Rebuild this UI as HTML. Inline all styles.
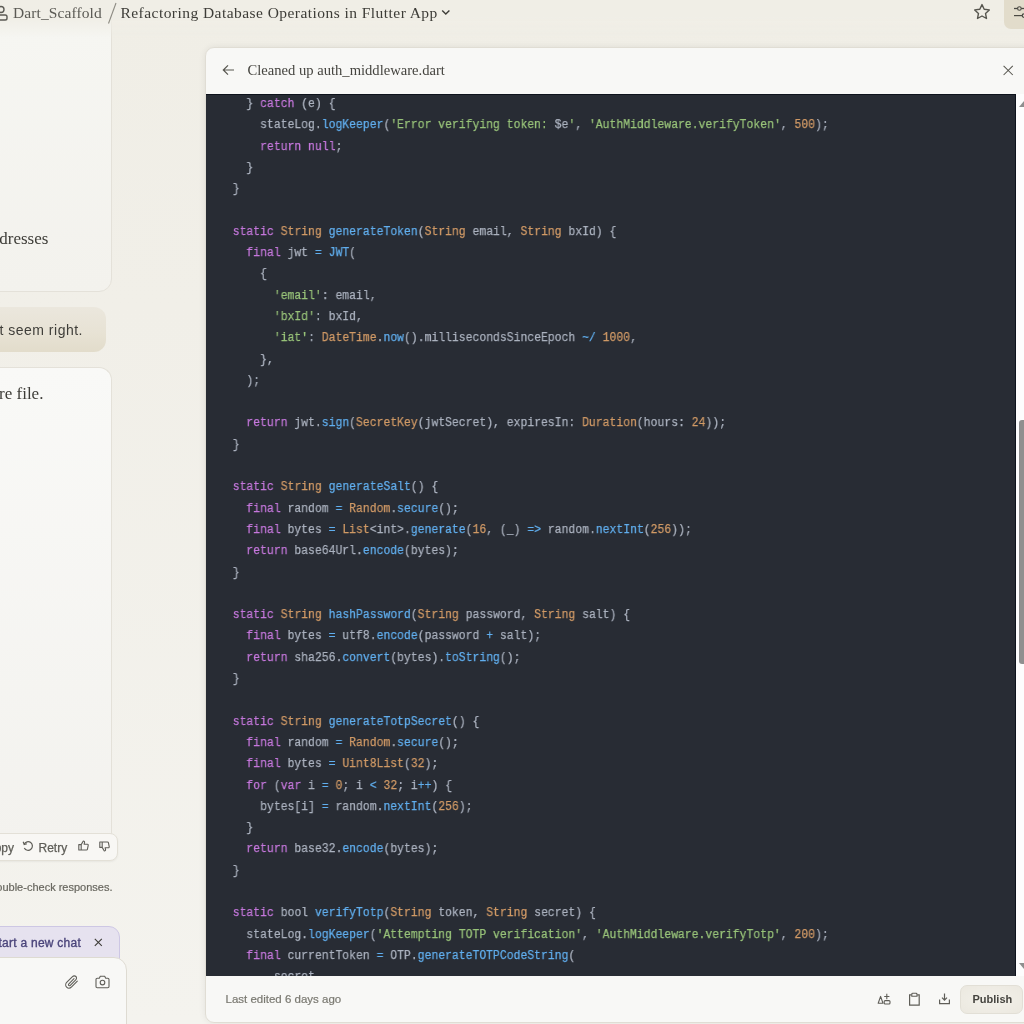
<!DOCTYPE html>
<html><head><meta charset="utf-8">
<style>
*{margin:0;padding:0;box-sizing:border-box}
html,body{width:1024px;height:1024px;overflow:hidden}
html{background:linear-gradient(#f0eee6 0,#f1efe8 30%,#f4f3ee 100%)}
#root{position:absolute;left:0;top:0;width:1024px;height:1024px;will-change:transform}
body{font-family:"Liberation Sans",sans-serif;position:relative}
.abs{position:absolute}
.serif{font-family:"Liberation Serif",serif}
/* top bar */
#crumb1{left:13px;top:3.8px;font-size:15.5px;color:#5b5a54;white-space:nowrap;letter-spacing:0.1px}
#slash{left:107px;top:2px;width:10px;height:22px}
#crumb2{left:120.5px;top:3.8px;font-size:15.5px;color:#3d3c37;white-space:nowrap;letter-spacing:0.45px}
/* left column */
.card{background:#f6f5f1;border:1px solid #e4e1d9;border-radius:13px}
#card1{left:-20px;top:-20px;width:132px;height:311.5px;background:linear-gradient(#f6f6f2 15%,#f3f2ed)}
#card2{left:-20px;top:367px;width:132px;height:480px;border-bottom:none;border-radius:13px 13px 0 0;background:linear-gradient(#f9f9f7,#f3f2ee)}
#bubble{left:-20px;top:307px;width:126px;height:45px;border-radius:12px;background:linear-gradient(#ebe7dd,#e7e2d4 60%,#e2dccb)}
.ltext{white-space:nowrap;color:#3d3c37}
#t1{right:975.6px;top:229px;font-size:17px}
#t2{right:941px;top:322px;font-size:14px;color:#3f3e39;letter-spacing:0.5px}
#t3{right:980.6px;top:383.5px;font-size:17px}
#actions{left:-20px;top:833px;width:138px;height:28px;background:#f8f7f4;border:1px solid #e3e0d7;border-radius:8px;box-shadow:0 1px 2px rgba(0,0,0,.05)}
#acttext{left:0;top:840.5px;font-size:12px;color:#5f5e58;white-space:nowrap;-webkit-text-stroke:0.25px #5f5e58}
#disclaimer{right:911.5px;top:881px;font-size:11px;color:#68675f;white-space:nowrap;-webkit-text-stroke:0.2px #68675f}
#banner{left:-20px;top:926px;width:140px;height:50px;background:#e6e2ef;border:1px solid #cdc7e4;border-radius:11px}
#bantext{right:943px;top:936px;font-size:12px;color:#4a447a;white-space:nowrap;-webkit-text-stroke:0.35px #4a447a;letter-spacing:0.25px}
#input{left:-20px;top:957px;width:147px;height:90px;background:#f8f8f6;border:1px solid #dedbd2;border-radius:13px}
/* artifact panel */
#panel{left:205px;top:47px;width:831px;height:975.5px;background:#f8f8f6;border:1px solid #e0ddd4;border-radius:9px;overflow:hidden;box-shadow:0 0 7px rgba(0,0,0,.07)}
#ptitle{left:247.5px;top:61.8px;font-size:14.6px;color:#45443f;white-space:nowrap;letter-spacing:0px}
#code{left:206px;top:93.7px;width:810px;height:882px;background:#282c34;border-top:1px solid #0e131c;border-right:1px solid #0e131c;overflow:hidden}
pre{position:absolute;left:12.9px;top:-2.0px;font-family:"Liberation Mono",monospace;font-size:13.7px;line-height:21.29px;color:#abb2bf;transform:scaleX(0.83394);transform-origin:0 0;will-change:transform;-webkit-text-stroke:0.25px currentColor}
pre i{font-style:normal}
.k{color:#c678dd}.t{color:#d19a66}.f{color:#61afef}.s{color:#98c379}.n{color:#d19a66}.o{color:#61afef}
#sb{left:1016px;top:93.7px;width:8px;height:882px;background:#fdfdfd}
#thumb{left:1019px;top:420px;width:8px;height:243.5px;background:#8f8f8f;border-radius:3px}
#footer-text{left:225.5px;top:992.5px;font-size:11.5px;color:#7a7971;white-space:nowrap;-webkit-text-stroke:0.2px #7a7971}
#publish{left:960px;top:985px;width:63px;height:29px;border-radius:7px;background:radial-gradient(ellipse at center,#f3f1eb,#ebe8df);border:1px solid #e2dfd6}
#pubtext{left:972.5px;top:993px;font-size:11px;font-weight:bold;color:#45443f}
svg{position:absolute;overflow:visible}
</style></head><body><div id="root">
<!-- top bar -->
<div class="abs" style="left:0;top:0;width:1024px;height:50px;background:linear-gradient(#f0eee6 0,#f0eee6 17px,rgba(240,238,230,0) 38px);z-index:1"></div>
<div style="position:absolute;left:0;top:0;z-index:2">
<svg style="left:-6px;top:5px" width="14" height="16" viewBox="0 0 14 16"><circle cx="7" cy="4.5" r="3" fill="none" stroke="#5b5a54" stroke-width="1.4"/><rect x="1" y="10" width="12" height="5" rx="1.8" fill="none" stroke="#5b5a54" stroke-width="1.4"/></svg>
<div id="crumb1" class="abs serif">Dart_Scaffold</div>
<svg style="left:107px;top:2px" width="10" height="22"><line x1="9" y1="1" x2="1.5" y2="21.5" stroke="#8d8b83" stroke-width="1.1"/></svg>
<div id="crumb2" class="abs serif">Refactoring Database Operations in Flutter App</div>
<svg style="left:441px;top:9px" width="10" height="7"><polyline points="1.2,1.5 4.8,5 8.4,1.5" fill="none" stroke="#3d3c37" stroke-width="1.4"/></svg>
<svg style="left:973px;top:3px" width="18" height="18" viewBox="0 0 18 18"><path d="M9 1.6 L11.2 6.3 L16.3 6.9 L12.5 10.4 L13.5 15.5 L9 13 L4.5 15.5 L5.5 10.4 L1.7 6.9 L6.8 6.3 Z" fill="none" stroke="#57564f" stroke-width="1.4" stroke-linejoin="round"/></svg>
<div class="abs" style="left:1004px;top:-8px;width:40px;height:37px;background:#e2dccb;border-radius:7px"></div>
<svg style="left:1014px;top:6px" width="12" height="14"><line x1="0" y1="2.5" x2="12" y2="2.5" stroke="#4a4943" stroke-width="1.3"/><circle cx="5.4" cy="2.5" r="1.8" fill="#e2dccb" stroke="#4a4943" stroke-width="1.1"/><line x1="0" y1="9.6" x2="12" y2="9.6" stroke="#4a4943" stroke-width="1.2"/><circle cx="10" cy="9.6" r="1.8" fill="#e2dccb" stroke="#4a4943" stroke-width="1.2"/></svg>

</div>
<!-- left column -->
<div id="card1" class="abs card"></div>
<div id="t1" class="abs ltext serif">dresses</div>
<div id="bubble" class="abs"></div>
<div id="t2" class="abs ltext">t seem right.</div>
<div id="card2" class="abs card"></div>
<div id="t3" class="abs ltext serif">middleware file.</div>
<div id="actions" class="abs"></div>
<div id="acttext" class="abs"><span style="position:absolute;right:-14px;white-space:nowrap">Copy</span></div>
<svg style="left:22px;top:840px" width="12" height="12" viewBox="0 0 12 12"><path d="M2.2 4.2 A4.3 4.3 0 1 1 2.3 8" fill="none" stroke="#5f5e58" stroke-width="1.2"/><path d="M1.2 1.8 L2.2 4.6 L4.9 3.7" fill="none" stroke="#5f5e58" stroke-width="1.2"/></svg>
<div class="abs" style="left:38.5px;top:840.5px;font-size:12px;color:#5f5e58;-webkit-text-stroke:0.25px #5f5e58">Retry</div>
<svg style="left:78px;top:840px" width="11" height="11" viewBox="0 0 11 11"><path d="M3.2 4.6 L5.3 1 C6.3 1 6.8 1.8 6.5 2.8 L6.1 4.2 L9.4 4.2 C10 4.2 10.3 4.8 10.2 5.3 L9.4 9.3 C9.3 9.8 8.9 10 8.4 10 L3.2 10 Z M0.8 4.6 L3.2 4.6 L3.2 10 L0.8 10 Z" fill="none" stroke="#5f5e58" stroke-width="1.1" stroke-linejoin="round"/></svg>
<svg style="left:99px;top:841px" width="11" height="11" viewBox="0 0 11 11"><path d="M3.2 6.4 L5.3 10 C6.3 10 6.8 9.2 6.5 8.2 L6.1 6.8 L9.4 6.8 C10 6.8 10.3 6.2 10.2 5.7 L9.4 1.7 C9.3 1.2 8.9 1 8.4 1 L3.2 1 Z M0.8 1 L3.2 1 L3.2 6.4 L0.8 6.4 Z" fill="none" stroke="#5f5e58" stroke-width="1.1" stroke-linejoin="round"/></svg>
<div id="disclaimer" class="abs">Claude can make mistakes. Please double-check responses.</div>
<div id="banner" class="abs"></div>
<div id="bantext" class="abs">Tip: Long chats cause you to reach your usage limits faster. Start a new chat</div>
<svg style="left:94px;top:938px" width="9" height="9"><path d="M0.8 0.8 L7.8 7.8 M7.8 0.8 L0.8 7.8" stroke="#3d3c37" stroke-width="1.1"/></svg>
<div id="input" class="abs"></div>
<svg style="left:65px;top:975px" width="14" height="14" viewBox="0 0 14 14"><path d="M12.3 6.2 L6.6 11.9 C5.1 13.4 2.9 13.4 1.6 12.1 C0.3 10.8 0.4 8.7 1.9 7.2 L7.5 1.6 C8.5 0.6 10 0.6 10.9 1.5 C11.8 2.4 11.7 3.9 10.7 4.9 L5.3 10.3 C4.8 10.8 4.1 10.8 3.7 10.4 C3.3 10 3.4 9.3 3.9 8.8 L9 3.7" fill="none" stroke="#5f5e58" stroke-width="1.1" stroke-linecap="round"/></svg>
<svg style="left:95px;top:975px" width="15" height="14" viewBox="0 0 15 14"><path d="M1 4.5 C1 3.7 1.6 3.2 2.3 3.2 L4.3 3.2 L5.3 1.3 L9.7 1.3 L10.7 3.2 L12.7 3.2 C13.4 3.2 14 3.7 14 4.5 L14 11.6 C14 12.3 13.4 12.8 12.7 12.8 L2.3 12.8 C1.6 12.8 1 12.3 1 11.6 Z" fill="none" stroke="#5f5e58" stroke-width="1.1" stroke-linejoin="round"/><circle cx="7.5" cy="7.6" r="2.3" fill="none" stroke="#5f5e58" stroke-width="1.1"/></svg>

<!-- artifact panel -->
<div id="panel" class="abs"></div>
<svg style="left:222px;top:64px" width="13" height="12" viewBox="0 0 13 12"><path d="M12 6 L1.5 6 M6 1.3 L1.3 6 L6 10.7" fill="none" stroke="#57564f" stroke-width="1.2"/></svg>
<div id="ptitle" class="abs serif">Cleaned up auth_middleware.dart</div>
<svg style="left:1003px;top:65px" width="11" height="11"><path d="M0.6 0.8 L9.8 10 M9.8 0.8 L0.6 10" stroke="#57564f" stroke-width="1.05"/></svg>
<div id="code" class="abs"><pre>    } <i class="k">catch</i> (e) {
      stateLog.<i class="f">logKeeper</i>(<i class="s">'Error verifying token: </i>$e<i class="s">'</i>, <i class="s">'AuthMiddleware.verifyToken'</i>, <i class="n">500</i>);
      <i class="k">return</i> <i class="k">null</i>;
    }
  }

  <i class="k">static</i> <i class="t">String</i> <i class="f">generateToken</i>(<i class="t">String</i> email, <i class="t">String</i> bxId) {
    <i class="k">final</i> jwt <i class="o">=</i> <i class="f">JWT</i>(
      {
        <i class="s">'email'</i>: email,
        <i class="s">'bxId'</i>: bxId,
        <i class="s">'iat'</i>: <i class="t">DateTime</i>.<i class="f">now</i>().millisecondsSinceEpoch <i class="o">~/</i> <i class="n">1000</i>,
      },
    );

    <i class="k">return</i> jwt.<i class="f">sign</i>(<i class="t">SecretKey</i>(jwtSecret), expiresIn: <i class="t">Duration</i>(hours: <i class="n">24</i>));
  }

  <i class="k">static</i> <i class="t">String</i> <i class="f">generateSalt</i>() {
    <i class="k">final</i> random <i class="o">=</i> <i class="t">Random</i>.<i class="f">secure</i>();
    <i class="k">final</i> bytes <i class="o">=</i> <i class="t">List</i>&lt;int&gt;.<i class="f">generate</i>(<i class="n">16</i>, (_) <i class="o">=&gt;</i> random.<i class="f">nextInt</i>(<i class="n">256</i>));
    <i class="k">return</i> base64Url.<i class="f">encode</i>(bytes);
  }

  <i class="k">static</i> <i class="t">String</i> <i class="f">hashPassword</i>(<i class="t">String</i> password, <i class="t">String</i> salt) {
    <i class="k">final</i> bytes <i class="o">=</i> utf8.<i class="f">encode</i>(password <i class="o">+</i> salt);
    <i class="k">return</i> sha256.<i class="f">convert</i>(bytes).<i class="f">toString</i>();
  }

  <i class="k">static</i> <i class="t">String</i> <i class="f">generateTotpSecret</i>() {
    <i class="k">final</i> random <i class="o">=</i> <i class="t">Random</i>.<i class="f">secure</i>();
    <i class="k">final</i> bytes <i class="o">=</i> <i class="t">Uint8List</i>(<i class="n">32</i>);
    <i class="k">for</i> (<i class="k">var</i> i <i class="o">=</i> <i class="n">0</i>; i <i class="o">&lt;</i> <i class="n">32</i>; i<i class="o">++</i>) {
      bytes[i] <i class="o">=</i> random.<i class="f">nextInt</i>(<i class="n">256</i>);
    }
    <i class="k">return</i> base32.<i class="f">encode</i>(bytes);
  }

  <i class="k">static</i> bool <i class="f">verifyTotp</i>(<i class="t">String</i> token, <i class="t">String</i> secret) {
    stateLog.<i class="f">logKeeper</i>(<i class="s">'Attempting TOTP verification'</i>, <i class="s">'AuthMiddleware.verifyTotp'</i>, <i class="n">200</i>);
    <i class="k">final</i> currentToken <i class="o">=</i> OTP.<i class="f">generateTOTPCodeString</i>(
        secret,
</pre></div>
<div id="sb" class="abs"></div>
<div id="thumb" class="abs"></div>
<svg style="left:1018px;top:100px" width="8" height="8"><path d="M1 7 L6 1 L11 7 Z" fill="#8f8f8f"/></svg>
<svg style="left:1018px;top:962px" width="8" height="8"><path d="M1 1 L6 7 L11 1 Z" fill="#8f8f8f"/></svg>
<div id="footer-text" class="abs">Last edited 6 days ago</div>
<svg style="left:877px;top:992.5px" width="15" height="13" viewBox="0 0 15 13"><path d="M1.2 10.2 L3.6 3.4 L6 10.2 Z" fill="none" stroke="#5f5e58" stroke-width="1.1" stroke-linejoin="round"/><path d="M9.8 0.8 L9.8 6.2 M7.2 3.5 L12.4 3.5" stroke="#5f5e58" stroke-width="1.1"/><rect x="7.2" y="7.6" width="5.8" height="3.4" rx="1" fill="none" stroke="#5f5e58" stroke-width="1.1"/></svg>
<svg style="left:908px;top:992px" width="13" height="15" viewBox="0 0 13 15"><path d="M3.6 2.9 L1.6 2.9 L1.6 13.1 L11.2 13.1 L11.2 2.9 L9.2 2.9" fill="none" stroke="#5f5e58" stroke-width="1.2"/><path d="M3.8 4.2 L3.8 2.2 C3.8 1.6 4.2 1.3 4.8 1.3 L8 1.3 C8.6 1.3 9 1.6 9 2.2 L9 4.2 Z" fill="none" stroke="#5f5e58" stroke-width="1.1"/></svg>
<svg style="left:938px;top:993px" width="13" height="12" viewBox="0 0 13 12"><path d="M6.5 0.6 L6.5 7 M4 4.6 L6.5 7.1 L9 4.6 M1.6 6.6 L1.6 10.6 L11.4 10.6 L11.4 6.6" fill="none" stroke="#5f5e58" stroke-width="1.2"/></svg>
<div id="publish" class="abs"></div>
<div id="pubtext" class="abs">Publish</div>
</div></body></html>
